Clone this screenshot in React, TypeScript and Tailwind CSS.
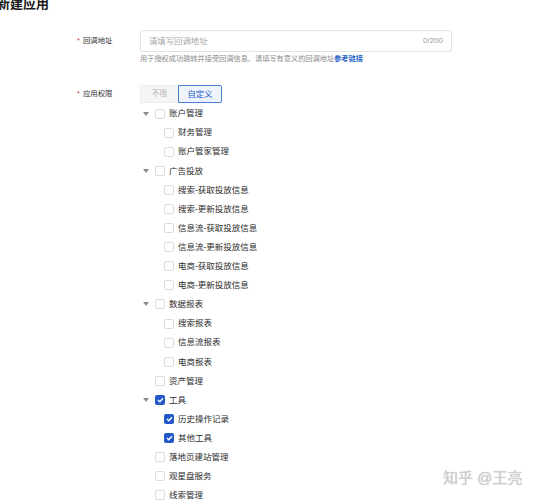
import React from "react";

type Node = { label: string; level: 0 | 1; caret?: boolean; checked?: boolean };

const nodes: Node[] = [
  { label: "账户管理", level: 0, caret: true },
  { label: "财务管理", level: 1 },
  { label: "账户管家管理", level: 1 },
  { label: "广告投放", level: 0, caret: true },
  { label: "搜索-获取投放信息", level: 1 },
  { label: "搜索-更新投放信息", level: 1 },
  { label: "信息流-获取投放信息", level: 1 },
  { label: "信息流-更新投放信息", level: 1 },
  { label: "电商-获取投放信息", level: 1 },
  { label: "电商-更新投放信息", level: 1 },
  { label: "数据报表", level: 0, caret: true },
  { label: "搜索报表", level: 1 },
  { label: "信息流报表", level: 1 },
  { label: "电商报表", level: 1 },
  { label: "资产管理", level: 0 },
  { label: "工具", level: 0, caret: true, checked: true },
  { label: "历史操作记录", level: 1, checked: true },
  { label: "其他工具", level: 1, checked: true },
  { label: "落地页建站管理", level: 0 },
  { label: "观星盘服务", level: 0 },
  { label: "线索管理", level: 0 },
];

function Checkbox({ checked }: { checked?: boolean }) {
  if (checked) {
    return (
      <span className="flex h-[10px] w-[10px] shrink-0 items-center justify-center rounded-[2px] bg-[#2458c9]">
        <svg width="7" height="6" viewBox="0 0 7 6">
          <path d="M1 3 L2.8 4.7 L6 1.2" fill="none" stroke="#fff" strokeWidth="1.4" />
        </svg>
      </span>
    );
  }
  return <span className="h-[10px] w-[10px] shrink-0 rounded-[2px] border border-[#dcdcdc] bg-white" />;
}

function Row({ n }: { n: Node }) {
  return (
    <div className={`flex h-[19.1px] items-center ${n.level === 1 ? "pl-[9px]" : ""}`}>
      <span className="flex w-[15px] shrink-0 items-center justify-start pl-[3px]">
        {n.caret && (
          <svg width="6" height="4" viewBox="0 0 6 4">
            <path d="M0 0 L6 0 L3 4 Z" fill="#8c8c8c" />
          </svg>
        )}
      </span>
      <Checkbox checked={n.checked} />
      <span className="ml-[4px] text-[8.5px] leading-none text-[#2b2b2b]">{n.label}</span>
    </div>
  );
}

export default function App() {
  return (
    <div
      className="relative h-[500px] w-[542px] overflow-hidden bg-white"
      style={{ fontFamily: '"Liberation Sans", "Noto Sans CJK SC", sans-serif' }}
    >
      <div className="ml-[-3px] mt-[-4px] text-[13px] font-semibold leading-[16px] text-[#1a1a1a]">新建应用</div>

      <div className="mt-[18px] flex">
        <div className="flex h-[22px] w-[140px] shrink-0 items-center pl-[77px] text-[7.4px] text-[#333]">
          <span className="mr-[3px] text-[#e04040]">*</span>回调地址
        </div>
        <div>
          <div className="flex h-[22px] w-[312px] items-center justify-between rounded-[2px] border border-[#e3e3e3] px-[8px]">
            <span className="text-[8.4px] text-[#a8a8a8]">请填写回调地址</span>
            <span className="text-[8px] text-[#9a9a9a]">0/200</span>
          </div>
          <div className="mt-[2px] text-[7.2px] leading-[10px] text-[#8c8c8c]">
            用于授权成功跳转并接受回调信息。请填写有意义的回调地址
            <span className="font-semibold text-[#2764c9]">参考链接</span>
          </div>
        </div>
      </div>

      <div className="mt-[21px] flex">
        <div className="flex h-[18px] w-[140px] shrink-0 items-center pl-[77px] text-[7.4px] text-[#333]">
          <span className="mr-[3px] text-[#e04040]">*</span>应用权限
        </div>
        <div>
          <div className="flex h-[18px]">
            <div className="flex w-[38px] items-center justify-center rounded-l-[2px] border border-r-0 border-[#ececec] bg-[#f5f5f5] text-[7.8px] text-[#b5b5b5]">
              不限
            </div>
            <div className="flex w-[44px] items-center justify-center rounded-r-[2px] border border-[#4a7fd6] bg-[#eef4fd] text-[8.4px] text-[#2458c9]">
              自定义
            </div>
          </div>
          <div className="mt-[1px]">
            {nodes.map((n, i) => (
              <Row key={i} n={n} />
            ))}
          </div>
        </div>
      </div>

      <div
        className="absolute left-[443px] top-[469px] text-[15px] leading-[18px] text-[#d0d0d0]"
        style={{ textShadow: "0 0 1px #bdbdbd" }}
      >
        知乎 @王亮
      </div>
    </div>
  );
}
